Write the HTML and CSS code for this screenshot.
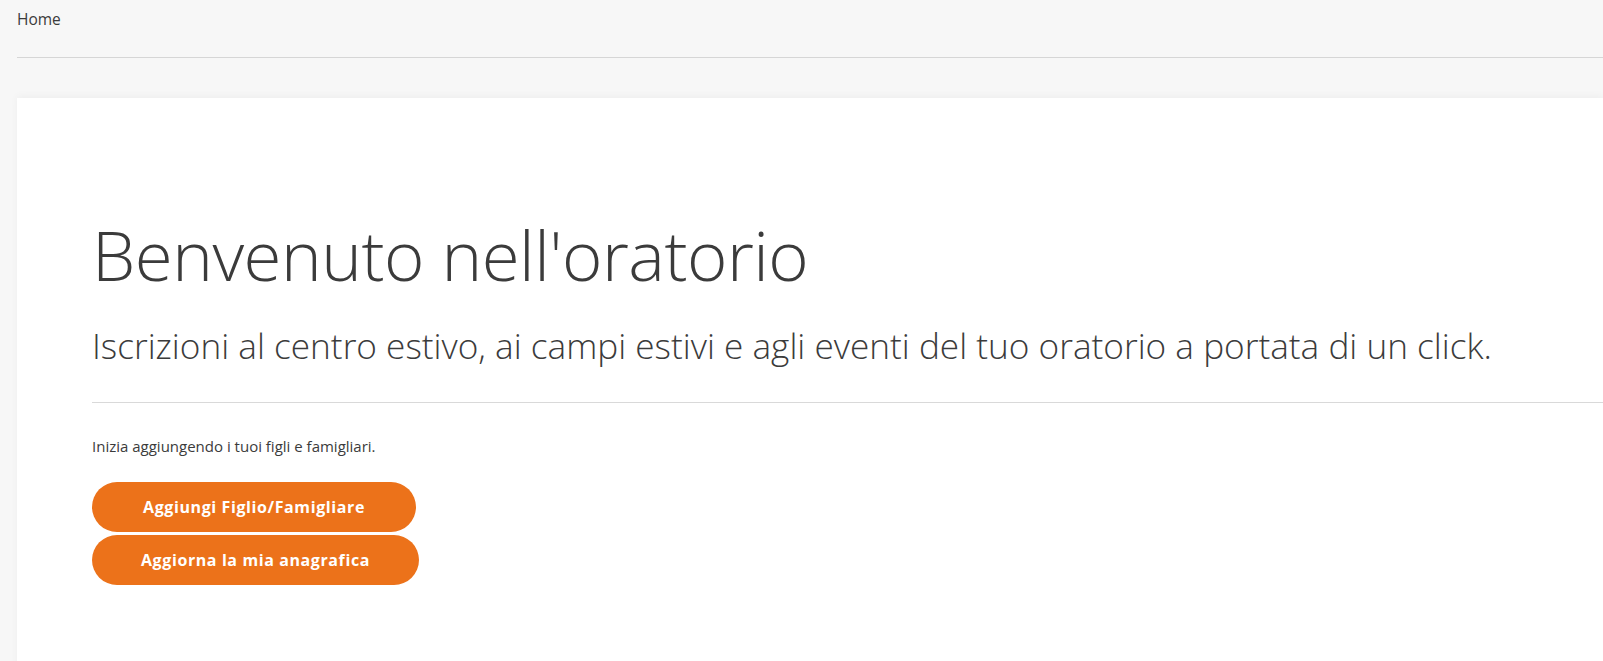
FILE: index.html
```html
<!DOCTYPE html>
<html lang="it">

<head>
    <meta charset="UTF-8">
    <meta name="viewport" content="width=device-width, initial-scale=1.0">
    <title>Home</title>
    <link rel="stylesheet" href="styles.css">
</head>

<body>
    <nav class="breadcrumb">
        <span class="breadcrumb-item">Home</span>
    </nav>

    <main class="card">
        <div class="jumbotron">
            <h1 class="display-title">Benvenuto nell'oratorio</h1>
            <p class="lead">Iscrizioni al centro estivo, ai campi estivi e agli eventi del tuo oratorio a portata di un click.</p>
            <hr class="divider">
            <p class="intro">Inizia aggiungendo i tuoi figli e famigliari.</p>
            <div class="actions">
                <a class="btn-pill" href="#">Aggiungi Figlio/Famigliare</a>
                <a class="btn-pill" href="#">Aggiorna la mia anagrafica</a>
            </div>
        </div>
    </main>
</body>

</html>
```

FILE: styles.css
```css
html, body {
    overflow: hidden;
}

body {
    font-family: "Open Sans", "Liberation Sans", sans-serif;
    margin: 0;
    padding: 0 0 0 17px;
    background-color: #f7f7f7;
    color: #3b3b3b;
}

.breadcrumb {
    height: 58px;
    border-bottom: 1px solid #d6d6d6;
    font-size: 15.5px;
    line-height: 20px;
    padding-top: 9px;
    box-sizing: border-box;
}

.breadcrumb-item {
    color: #3b3b3b;
}

.card {
    margin-top: 40px;
    background-color: #fff;
    min-height: 600px;
    box-shadow: 0 -2px 8px rgba(0, 0, 0, 0.04);
}

.jumbotron {
    padding: 114px 0 0 75px;
}

.display-title {
    font-size: 69px;
    font-weight: 300;
    line-height: 84px;
    margin: 0;
    color: #3b3b3b;
    letter-spacing: -0.5px;
}

.lead {
    font-size: 35.2px;
    font-weight: 300;
    line-height: 46px;
    margin: 26px 0 0;
    color: #3b3b3b;
}

.divider {
    border: 0;
    border-top: 1px solid #d9d9d9;
    margin: 34px 0 0;
}

.intro {
    font-size: 15px;
    line-height: 20px;
    margin: 33px 0 0;
}

.actions {
    margin-top: 26px;
    display: flex;
    flex-direction: column;
    align-items: flex-start;
    gap: 3px;
}

.btn-pill {
    display: inline-flex;
    align-items: center;
    justify-content: center;
    height: 50px;
    border-radius: 25px;
    background-color: #ec721a;
    color: #fff;
    font-size: 16px;
    font-weight: 700;
    letter-spacing: 0.6px;
    text-decoration: none;
}

.btn-pill:first-child {
    width: 324px;
}

.btn-pill:last-child {
    width: 327px;
}
```
